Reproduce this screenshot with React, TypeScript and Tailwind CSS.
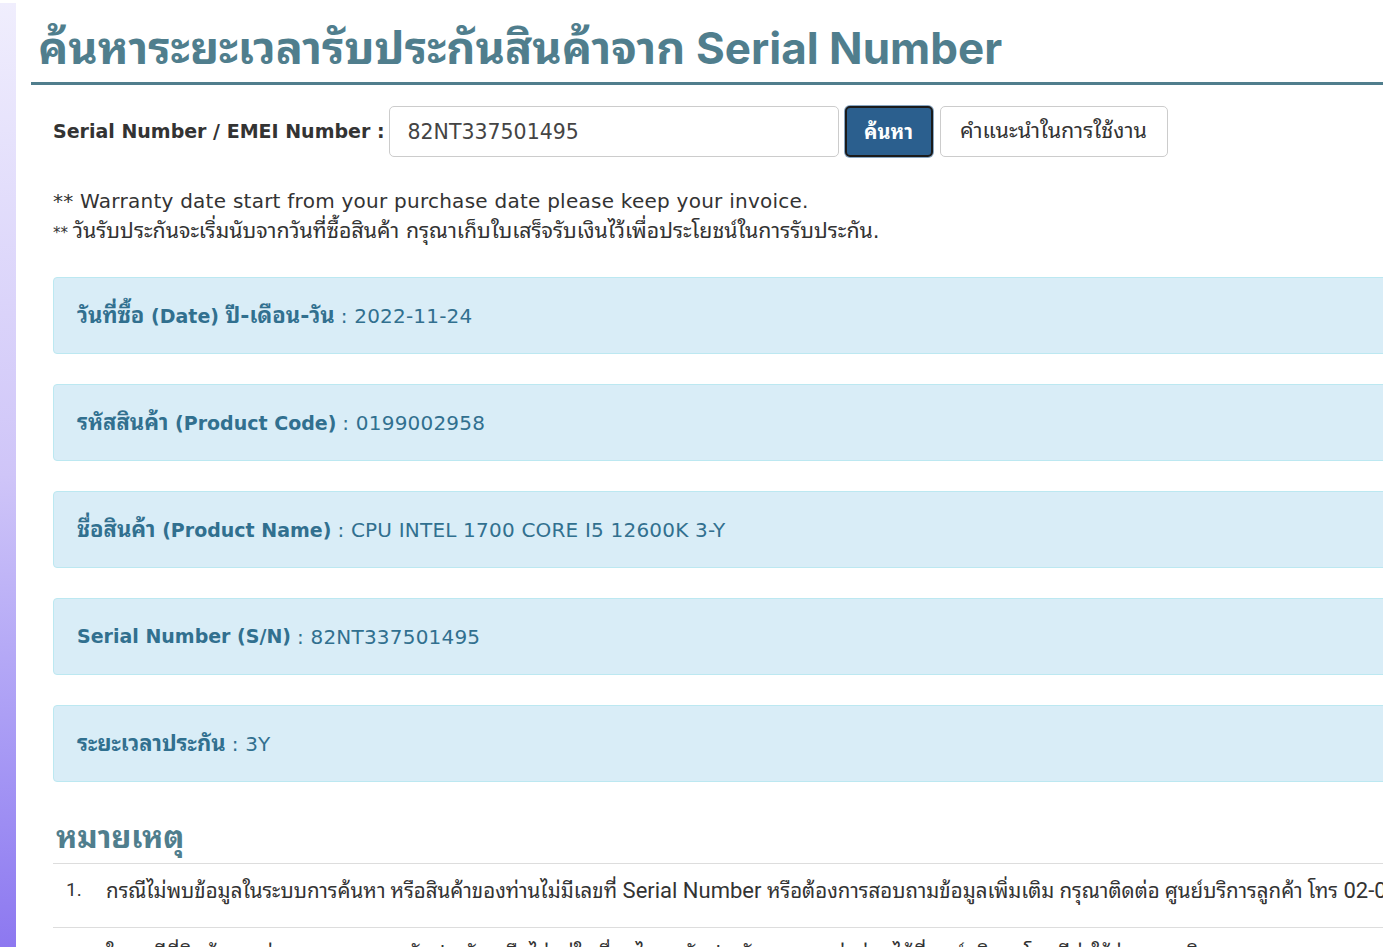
import React, { useState } from "react";

interface InfoRow {
  label: string;
  value: string;
}

const rows: InfoRow[] = [
  { label: "วันที่ซื้อ (Date) ปี-เดือน-วัน", value: "2022-11-24" },
  { label: "รหัสสินค้า (Product Code)", value: "0199002958" },
  { label: "ชื่อสินค้า (Product Name)", value: "CPU INTEL 1700 CORE I5 12600K 3-Y" },
  { label: "Serial Number (S/N)", value: "82NT337501495" },
  { label: "ระยะเวลาประกัน", value: "3Y" },
];

const notes: string[] = [
  "กรณีไม่พบข้อมูลในระบบการค้นหา หรือสินค้าของท่านไม่มีเลขที่ Serial Number หรือต้องการสอบถามข้อมูลเพิ่มเติม กรุณาติดต่อ ศูนย์บริการลูกค้า โทร 02-017-3777",
  "ในกรณีที่สินค้าของท่านหมดระยะเวลารับประกัน หรือไม่อยู่ในเงื่อนไขการรับประกัน สามารถส่งซ่อมได้ที่ศูนย์บริการ โดยมีค่าใช้จ่ายตามจริง",
];

const wide =
  "font-['DejaVu_Sans','Noto_Sans_Thai_Looped','Loma','Garuda','Waree','Noto_Sans_Thai','Noto_Sans',sans-serif]";

// thai glyphs of the installed font run small, so thai runs get their own size
const Mixed: React.FC<{ text: string; th: string; en?: string }> = ({ text, th, en }) => {
  const parts = text.split(/([\u0E00-\u0E7F]+(?:[-\s.]*[\u0E00-\u0E7F]+)*)/);
  return (
    <>
      {parts.map((p, i) =>
        p === "" ? null : /[\u0E00-\u0E7F]/.test(p) ? (
          <span key={i} className={th}>
            {p}
          </span>
        ) : (
          <span key={i} className={en}>
            {p}
          </span>
        )
      )}
    </>
  );
};

const App: React.FC = () => {
  const [serial, setSerial] = useState<string>("82NT337501495");

  return (
    <div className="flex h-[947px] w-full overflow-hidden bg-white">
      {/* purple side strip */}
      <div className="mt-[3px] w-4 shrink-0 bg-linear-to-b from-[#f0eefd] via-[#cfc5f8] to-[#8d78f0]" />

      <div className={`w-[1420px] shrink-0 ${wide}`}>
        <div className="ml-[15px] mt-[22px] border-b-[3px] border-[#507e8d]">
          <h1 className="pl-[7px] pb-[8px] font-['Inter','Noto_Sans_Thai_Looped','Loma','Garuda','Noto_Sans_Thai',sans-serif] text-[44px] font-bold leading-[52px] text-[#507e8d]">
            <Mixed text="ค้นหาระยะเวลารับประกันสินค้าจาก Serial Number" th="text-[45px]" />
          </h1>
        </div>

        <div className="ml-[37px]">
          <div className="mt-[21px] flex items-center">
            <label htmlFor="serial" className="text-[19px] font-semibold text-[#333]">
              Serial Number / EMEI Number :
            </label>
            <input
              id="serial"
              type="text"
              value={serial}
              onChange={(e) => setSerial(e.target.value)}
              className="ml-[4px] h-[51px] w-[450px] rounded-[5px] border border-[#ccc] px-[18px] text-[20.5px] text-[#444] outline-none"
            />
            <button
              type="button"
              className="ml-[6px] h-[51px] w-[88px] rounded-[5px] border-2 border-[#1b1b1b] bg-[#2b5f8e] text-[20px] font-bold text-white shadow-[0_0_0_1px_#8aa7c2]"
            >
              ค้นหา
            </button>
            <button
              type="button"
              className="ml-[7px] h-[51px] w-[228px] rounded-[5px] border border-[#ccc] bg-white text-[21.5px] text-[#333]"
            >
              คำแนะนำในการใช้งาน
            </button>
          </div>

          <p className="mt-[29px] text-[20px] leading-[30px] tracking-[0.25px] text-[#333]">
            ** Warranty date start from your purchase date please keep your invoice.
          </p>
          <p className="h-[30px] text-[15px] leading-[30px] text-[#333]">
            **{" "}
            <span className="text-[21.3px]">
              วันรับประกันจะเริ่มนับจากวันที่ซื้อสินค้า กรุณาเก็บใบเสร็จรับเงินไว้เพื่อประโยชน์ในการรับประกัน.
            </span>
          </p>

          <div className="mt-[31px] flex flex-col gap-[30px]">
            {rows.map((row) => (
              <div
                key={row.label}
                className="flex h-[77px] items-center rounded-[4px] border border-[#bce8f1] bg-[#d9edf7] px-[23px] text-[19px] text-[#31708f]"
              >
                <span className="font-bold">
                  <Mixed text={row.label} th="text-[22px]" />
                </span>
                <span className="ml-[6px] text-[20px] tracking-[0.2px]">: {row.value}</span>
              </div>
            ))}
          </div>

          <h2 className="mt-[37px] pl-[3px] text-[31px] font-bold leading-[36px] text-[#507e8d]">หมายเหตุ</h2>
          <div className="mt-[8px] font-['Roboto','Noto_Sans_Thai_Looped','Loma','Garuda','Noto_Sans_Thai',sans-serif] text-[19px] text-[#333]">
            {notes.map((note, i) => (
              <div key={i} className="flex h-[64px] items-center border-t border-[#ddd] pb-[10px]">
                <span className="w-[53px] shrink-0 pl-[13px]">{i + 1}.</span>
                <span className="whitespace-nowrap">
                  <Mixed text={note} th="text-[20.5px]" en="text-[22px]" />
                </span>
              </div>
            ))}
          </div>
        </div>
      </div>
    </div>
  );
};

export default App;
